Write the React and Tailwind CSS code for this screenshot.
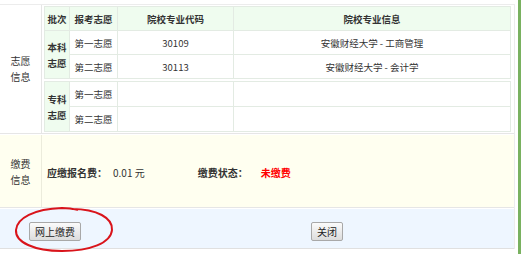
import React from 'react'

const cjk = { fontFamily: '"Noto Sans CJK SC", "Noto Sans", sans-serif' }

const cell = 'border border-[#e3ebe3] text-center whitespace-nowrap p-0'

const VolTable = ({ group, rows, header }) => (
  <table className="w-full border-collapse text-[9.5px] leading-[12px] text-[#333] table-fixed">
    <colgroup>
      <col className="w-[25px]" />
      <col className="w-[48px]" />
      <col className="w-[116px]" />
      <col />
    </colgroup>
    <tbody>
      {header && (
        <tr className="h-[24px] bg-[#effcef] font-bold">
          <td className={cell}>批次</td>
          <td className={cell}>报考志愿</td>
          <td className={cell}>院校专业代码</td>
          <td className={cell}>院校专业信息</td>
        </tr>
      )}
      {rows.map((r, i) => (
        <tr key={i} className={header ? 'h-[24px]' : 'h-[25px]'}>
          {i === 0 && (
            <td rowSpan={2} className={cell + ' bg-[#effcef] font-bold leading-[16px]'}>
              {group[0]}
              <br />
              {group[1]}
            </td>
          )}
          <td className={cell}>{r[0]}</td>
          <td className={cell}>{r[1]}</td>
          <td className={cell}>{r[2]}</td>
        </tr>
      ))}
    </tbody>
  </table>
)

const Btn = ({ children }) => (
  <button className="h-[19px] px-[5px] text-[10px] text-[#222] border border-[#a8a8a8] rounded-[2px] bg-gradient-to-b from-[#fbfbfb] to-[#dcdcdc] leading-[17px] whitespace-nowrap">
    {children}
  </button>
)

export default function App() {
  return (
    <div className="relative w-[523px] h-[254px] bg-white overflow-hidden" style={cjk}>
      <div className="w-[515px] border-t border-[#ececec] mt-[4px] border-r">
        {/* 志愿信息 */}
        <div className="flex border-b border-[#e6e6e6] bg-white">
          <div className="w-[42px] border-r border-[#e6e6e6] flex items-center justify-center text-[10px] text-[#333] leading-[16px] text-center">
            志愿
            <br />
            信息
          </div>
          <div className="flex-1 pl-[2px] pr-[3px] pt-[1px] pb-[1px] flex flex-col gap-[2px]">
            <VolTable
              header
              group={['本科', '志愿']}
              rows={[
                ['第一志愿', '30109', '安徽财经大学 - 工商管理'],
                ['第二志愿', '30113', '安徽财经大学 - 会计学'],
              ]}
            />
            <VolTable
              group={['专科', '志愿']}
              rows={[
                ['第一志愿', '', ''],
                ['第二志愿', '', ''],
              ]}
            />
          </div>
        </div>
        {/* 缴费信息 */}
        <div className="flex h-[73px] bg-[#fffff0] border-b border-[#e6e6e6] mt-[1px]">
          <div className="w-[42px] border-r border-[#ececdc] flex items-center justify-center text-[10px] text-[#333] leading-[16px] text-center pt-[2px]">
            缴费
            <br />
            信息
          </div>
          <div className="flex-1 flex items-center pt-[2px] text-[10px] text-[#333] whitespace-nowrap">
            <span className="ml-[5px] font-bold">应缴报名费：</span>
            <span className="ml-[6px]">0.01 元</span>
            <span className="ml-[53px] font-bold">缴费状态：</span>
            <span className="ml-[13px] font-bold text-[#ff0000]">未缴费</span>
          </div>
        </div>
        {/* buttons */}
        <div className="flex items-center h-[40px] bg-[#eef6ff] border-b border-[#e0e0e0] mt-[1px]">
          <div className="ml-[29px]">
            <Btn>网上缴费</Btn>
          </div>
          <div className="ml-[230px]">
            <Btn>关闭</Btn>
          </div>
        </div>
      </div>
      <div className="absolute top-0 right-[2px] w-[3px] h-full bg-[#79b160]" />
      <svg className="absolute left-[12px] top-[205px]" width="104" height="49" viewBox="0 0 104 49">
        <path
          d="M 60 4 C 85 4, 101 13, 100 25 C 99 38, 78 46, 50 46 C 22 46, 3 37, 4 25 C 5 13, 22 4, 50 3 C 56 3, 62 4, 66 5"
          fill="none"
          stroke="#d9141b"
          strokeWidth="2"
        />
      </svg>
    </div>
  )
}
